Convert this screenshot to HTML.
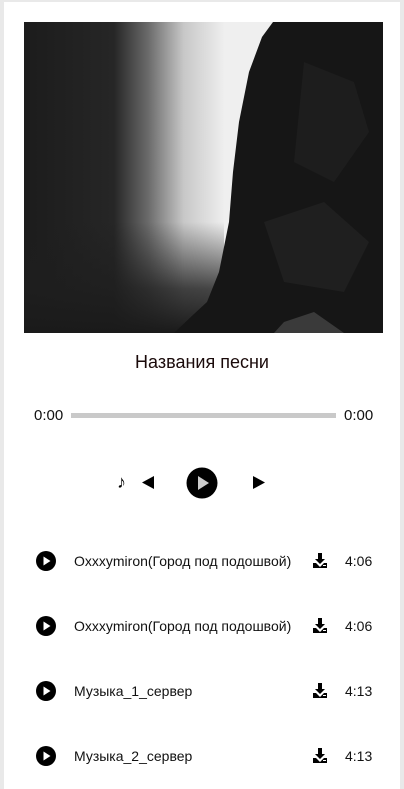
<!DOCTYPE html>
<html><head><meta charset="utf-8"><style>
html,body{margin:0;padding:0;}
body{width:404px;height:789px;background:#e9e9e9;font-family:"Liberation Sans",Arial,sans-serif;position:relative;overflow:hidden;}
.card{position:absolute;left:4px;top:2px;width:396px;height:787px;background:#fff;}
.img{position:absolute;left:24px;top:22px;width:359px;height:311px;}
.title{position:absolute;left:0;width:404px;top:352px;text-align:center;font-size:18px;color:#1a0a0a;}
.t{position:absolute;top:407px;font-size:15px;color:#111;}
.bar{position:absolute;left:71px;top:413px;width:265px;height:5px;background:#c9c9c9;}
.row{position:absolute;left:0;width:404px;height:20px;}
.row .name{position:absolute;left:74px;top:2px;font-size:14px;color:#111;}
.row .dur{position:absolute;left:345px;top:2px;font-size:14px;color:#111;}
.row svg{position:absolute;}
</style></head><body>
<div class="card"></div>
<svg class="img" viewBox="0 0 359 311" preserveAspectRatio="none">
<defs>
<linearGradient id="lg" x1="0" y1="0" x2="200" y2="0" gradientUnits="userSpaceOnUse">
<stop offset="0" stop-color="#1c1c1c"/><stop offset="0.45" stop-color="#262626"/><stop offset="0.62" stop-color="#6a6a6a"/><stop offset="0.8" stop-color="#c8c8c8"/><stop offset="1" stop-color="#eee"/></linearGradient>
<linearGradient id="bot" x1="0" y1="200" x2="0" y2="311" gradientUnits="userSpaceOnUse">
<stop offset="0" stop-color="#1e1e1e" stop-opacity="0"/><stop offset="0.6" stop-color="#1e1e1e" stop-opacity="0.8"/><stop offset="1" stop-color="#1a1a1a"/></linearGradient>
</defs>
<rect width="359" height="311" fill="#efefef"/>
<rect x="0" y="0" width="200" height="311" fill="url(#lg)"/>
<polygon points="0,200 200,200 200,311 0,311" fill="url(#bot)"/>
<polygon points="249,0 359,0 359,311 150,311 170,292 183,280 195,250 205,200 209,150 215,100 225,50 238,15" fill="#161616"/>
<polygon points="280,40 330,60 345,110 310,160 270,140" fill="#1d1d1d"/>
<polygon points="240,200 300,180 345,220 320,270 260,260" fill="#1f1f1f"/>
<polygon points="260,300 290,290 320,311 250,311" fill="#3a3a3a"/>
</svg>
<div class="title">Названия песни</div>
<div class="t" style="left:34px">0:00</div>
<div class="bar"></div>
<div class="t" style="left:344px">0:00</div>
<div style="position:absolute;left:117px;top:472px;font-size:18px;color:#000;">&#9834;</div>
<svg style="position:absolute;left:142px;top:476px" width="12" height="13"><polygon points="12,0 12,13 0,6.5" fill="#000"/></svg>
<svg style="position:absolute;left:186px;top:467px" width="32" height="32"><circle cx="16" cy="16" r="15.5" fill="#000"/><polygon points="12,9 12,23 23,16" fill="#ccc"/></svg>
<svg style="position:absolute;left:253px;top:476px" width="12" height="13"><polygon points="0,0 0,13 12,6.5" fill="#000"/></svg>

<div class="row" style="top:551px"><svg style="left:36px;top:0" width="20" height="20"><circle cx="10" cy="10" r="10" fill="#000"/><polygon points="7.5,5.5 7.5,14.5 14.5,10" fill="#fff"/></svg><span class="name">Oxxxymiron(Город под подошвой)</span><svg style="left:313px;top:2px" width="16" height="16"><path d="M5 0h4v6h3l-5 5-5-5h3z M0 10h3l4 4 4-4h3v5H0z" fill="#000"/><rect x="10" y="12" width="3" height="1" fill="#fff"/></svg><span class="dur">4:06</span></div>
<div class="row" style="top:616px"><svg style="left:36px;top:0" width="20" height="20"><circle cx="10" cy="10" r="10" fill="#000"/><polygon points="7.5,5.5 7.5,14.5 14.5,10" fill="#fff"/></svg><span class="name">Oxxxymiron(Город под подошвой)</span><svg style="left:313px;top:2px" width="16" height="16"><path d="M5 0h4v6h3l-5 5-5-5h3z M0 10h3l4 4 4-4h3v5H0z" fill="#000"/><rect x="10" y="12" width="3" height="1" fill="#fff"/></svg><span class="dur">4:06</span></div>
<div class="row" style="top:681px"><svg style="left:36px;top:0" width="20" height="20"><circle cx="10" cy="10" r="10" fill="#000"/><polygon points="7.5,5.5 7.5,14.5 14.5,10" fill="#fff"/></svg><span class="name">Музыка_1_сервер</span><svg style="left:313px;top:2px" width="16" height="16"><path d="M5 0h4v6h3l-5 5-5-5h3z M0 10h3l4 4 4-4h3v5H0z" fill="#000"/><rect x="10" y="12" width="3" height="1" fill="#fff"/></svg><span class="dur">4:13</span></div>
<div class="row" style="top:746px"><svg style="left:36px;top:0" width="20" height="20"><circle cx="10" cy="10" r="10" fill="#000"/><polygon points="7.5,5.5 7.5,14.5 14.5,10" fill="#fff"/></svg><span class="name">Музыка_2_сервер</span><svg style="left:313px;top:2px" width="16" height="16"><path d="M5 0h4v6h3l-5 5-5-5h3z M0 10h3l4 4 4-4h3v5H0z" fill="#000"/><rect x="10" y="12" width="3" height="1" fill="#fff"/></svg><span class="dur">4:13</span></div>
</body></html>
